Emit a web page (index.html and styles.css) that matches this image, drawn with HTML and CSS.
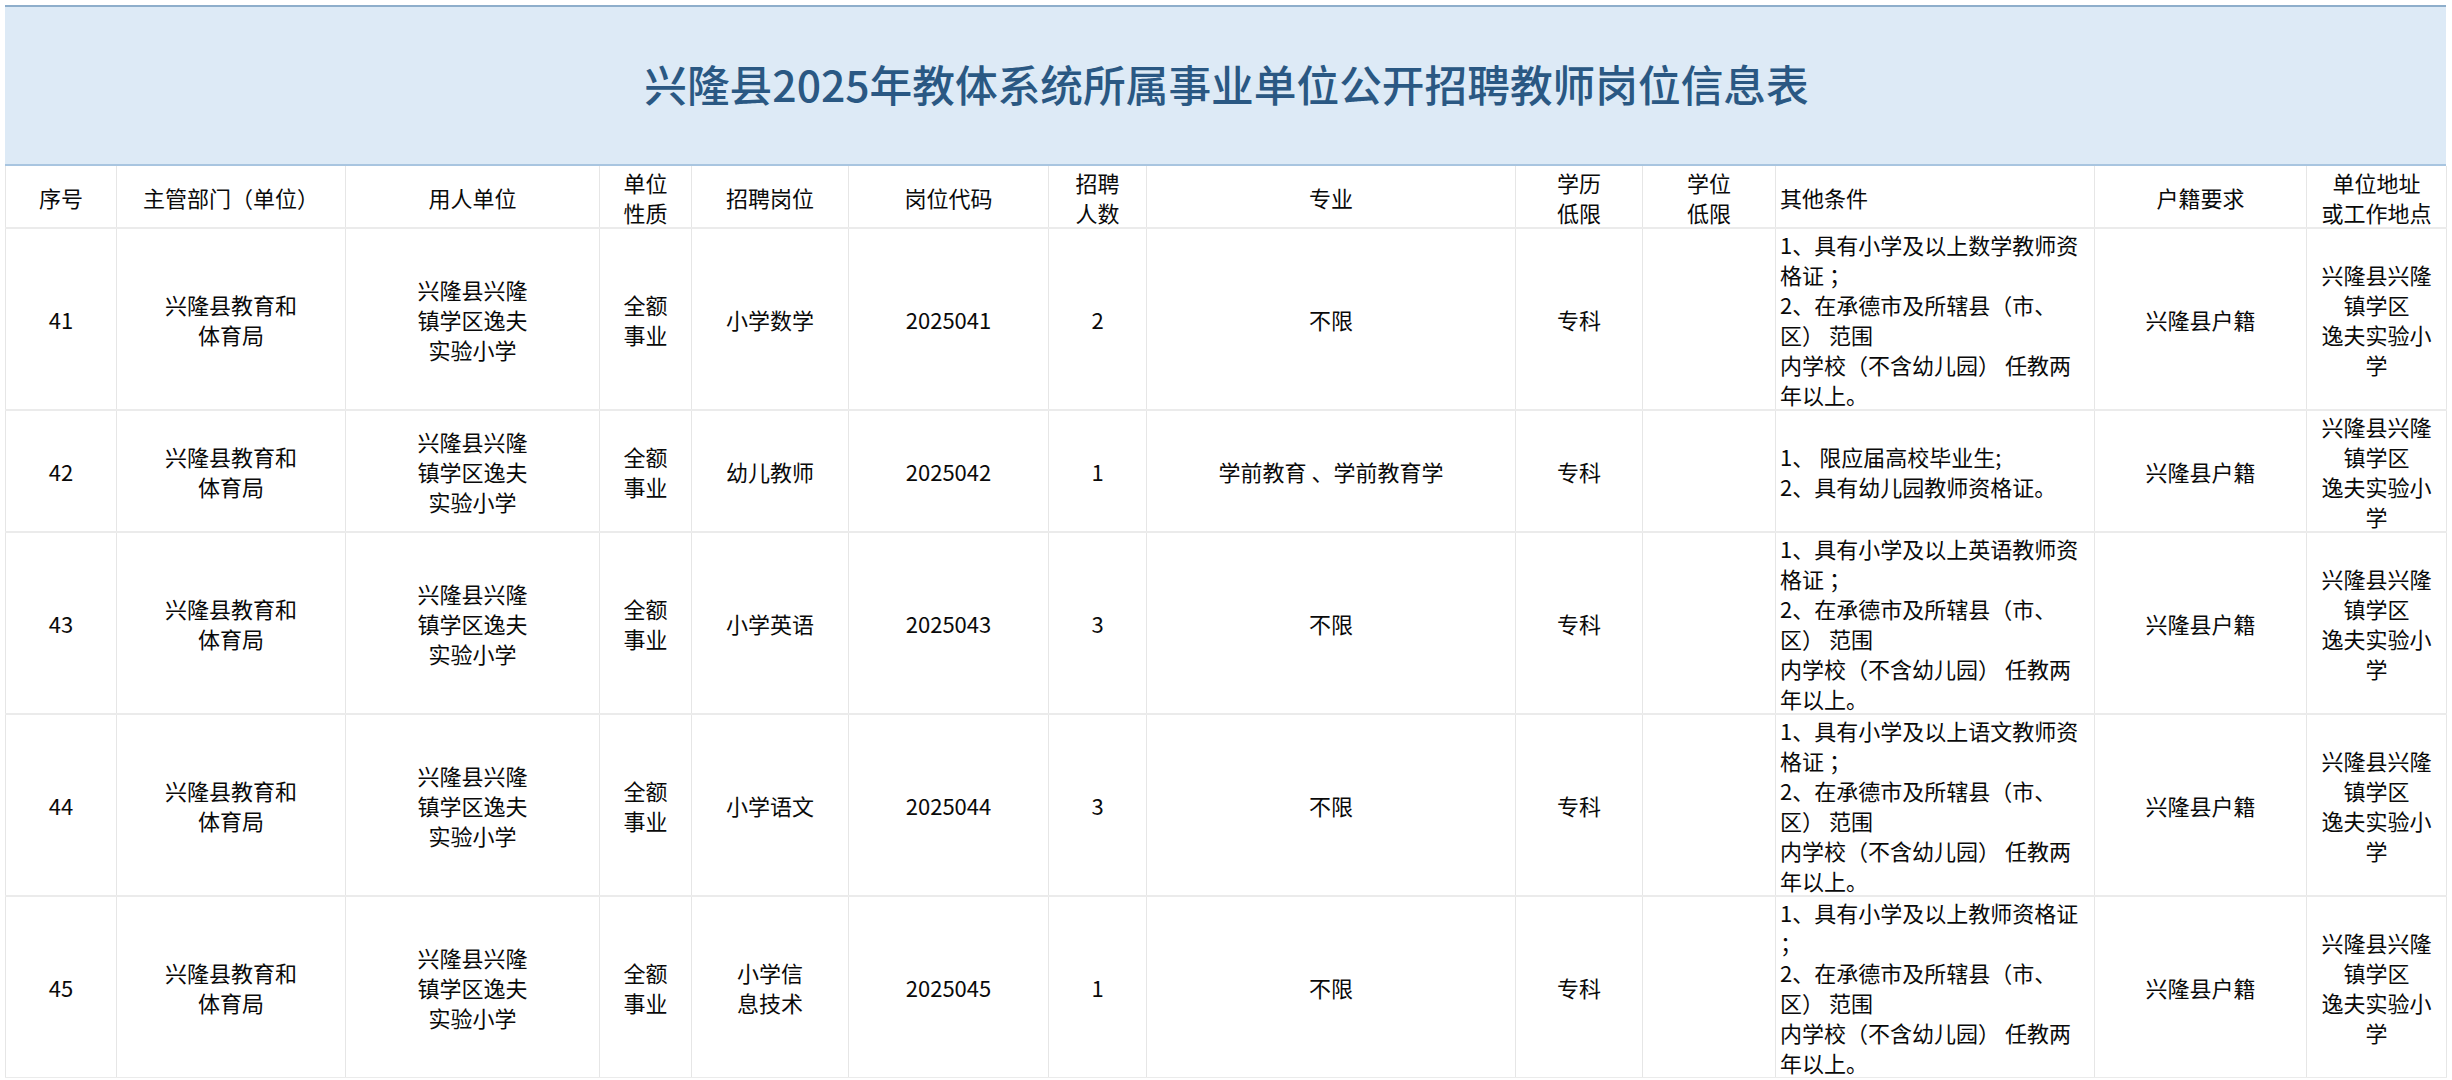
FILE: index.html
```html
<!DOCTYPE html>
<html lang="zh-CN">
<head>
<meta charset="utf-8">
<title>兴隆县2025年教体系统所属事业单位公开招聘教师岗位信息表</title>
<link rel="stylesheet" href="styles.css">
</head>
<body>
<div class="sheet">
  <div class="banner">
    <h1 class="title">兴隆县2025年教体系统所属事业单位公开招聘教师岗位信息表</h1>
  </div>
  <table class="grid">
    <colgroup>
      <col class="c-no">
      <col class="c-dept">
      <col class="c-unit">
      <col class="c-kind">
      <col class="c-post">
      <col class="c-code">
      <col class="c-num">
      <col class="c-major">
      <col class="c-edu">
      <col class="c-deg">
      <col class="c-other">
      <col class="c-huji">
      <col class="c-addr">
    </colgroup>
    <thead>
      <tr class="head">
        <th>序号</th>
        <th>主管部门（单位）</th>
        <th>用人单位</th>
        <th>单位<br>性质</th>
        <th>招聘岗位</th>
        <th>岗位代码</th>
        <th>招聘<br>人数</th>
        <th>专业</th>
        <th>学历<br>低限</th>
        <th>学位<br>低限</th>
        <th class="left">其他条件</th>
        <th>户籍要求</th>
        <th>单位地址<br>或工作地点</th>
      </tr>
    </thead>
    <tbody>
      <tr class="tall">
        <td>41</td>
        <td>兴隆县教育和<br>体育局</td>
        <td>兴隆县兴隆<br>镇学区逸夫<br>实验小学</td>
        <td>全额<br>事业</td>
        <td>小学数学</td>
        <td>2025041</td>
        <td>2</td>
        <td>不限</td>
        <td>专科</td>
        <td></td>
        <td class="left">1、具有小学及以上数学教师资<br>格证 ；<br>2、在承德市及所辖县（市、<br>区） 范围<br>内学校（不含幼儿园） 任教两<br>年以上。</td>
        <td>兴隆县户籍</td>
        <td>兴隆县兴隆<br>镇学区<br>逸夫实验小<br>学</td>
      </tr>
      <tr class="short">
        <td>42</td>
        <td>兴隆县教育和<br>体育局</td>
        <td>兴隆县兴隆<br>镇学区逸夫<br>实验小学</td>
        <td>全额<br>事业</td>
        <td>幼儿教师</td>
        <td>2025042</td>
        <td>1</td>
        <td>学前教育 、学前教育学</td>
        <td>专科</td>
        <td></td>
        <td class="left">1、 限应届高校毕业生;<br>2、具有幼儿园教师资格证。</td>
        <td>兴隆县户籍</td>
        <td>兴隆县兴隆<br>镇学区<br>逸夫实验小<br>学</td>
      </tr>
      <tr class="tall">
        <td>43</td>
        <td>兴隆县教育和<br>体育局</td>
        <td>兴隆县兴隆<br>镇学区逸夫<br>实验小学</td>
        <td>全额<br>事业</td>
        <td>小学英语</td>
        <td>2025043</td>
        <td>3</td>
        <td>不限</td>
        <td>专科</td>
        <td></td>
        <td class="left">1、具有小学及以上英语教师资<br>格证 ；<br>2、在承德市及所辖县（市、<br>区） 范围<br>内学校（不含幼儿园） 任教两<br>年以上。</td>
        <td>兴隆县户籍</td>
        <td>兴隆县兴隆<br>镇学区<br>逸夫实验小<br>学</td>
      </tr>
      <tr class="tall">
        <td>44</td>
        <td>兴隆县教育和<br>体育局</td>
        <td>兴隆县兴隆<br>镇学区逸夫<br>实验小学</td>
        <td>全额<br>事业</td>
        <td>小学语文</td>
        <td>2025044</td>
        <td>3</td>
        <td>不限</td>
        <td>专科</td>
        <td></td>
        <td class="left">1、具有小学及以上语文教师资<br>格证 ；<br>2、在承德市及所辖县（市、<br>区） 范围<br>内学校（不含幼儿园） 任教两<br>年以上。</td>
        <td>兴隆县户籍</td>
        <td>兴隆县兴隆<br>镇学区<br>逸夫实验小<br>学</td>
      </tr>
      <tr class="tall">
        <td>45</td>
        <td>兴隆县教育和<br>体育局</td>
        <td>兴隆县兴隆<br>镇学区逸夫<br>实验小学</td>
        <td>全额<br>事业</td>
        <td>小学信<br>息技术</td>
        <td>2025045</td>
        <td>1</td>
        <td>不限</td>
        <td>专科</td>
        <td></td>
        <td class="left">1、具有小学及以上教师资格证<br>；<br>2、在承德市及所辖县（市、<br>区） 范围<br>内学校（不含幼儿园） 任教两<br>年以上。</td>
        <td>兴隆县户籍</td>
        <td>兴隆县兴隆<br>镇学区<br>逸夫实验小<br>学</td>
      </tr>
    </tbody>
  </table>
</div>
</body>
</html>
```
FILE: styles.css
```css
html, body {
  margin: 0;
  padding: 0;
  background: #ffffff;
}

body {
  font-family: "Noto Sans CJK SC", "Noto Sans", sans-serif;
  color: #0a0a0a;
}

.sheet {
  width: 2441px;
  padding: 5px 6px 0 5px;
}

.banner {
  height: 157px;
  background: #ddeaf6;
  border-top: 2px solid #8eaecb;
  border-bottom: 2px solid #a8c5e0;
  display: flex;
  align-items: center;
  justify-content: center;
}

.title {
  margin: 0;
  font-size: 42.7px;
  font-weight: 500;
  color: #2a5883;
  line-height: 1;
  padding-bottom: 4px;
  padding-left: 2px;
}

.grid {
  width: 2441px;
  table-layout: fixed;
  border-collapse: collapse;
  font-size: 22px;
  line-height: 30px;
}

.c-no { width: 111px; }
.c-dept { width: 229px; }
.c-unit { width: 254px; }
.c-kind { width: 92px; }
.c-post { width: 157px; }
.c-code { width: 200px; }
.c-num { width: 98px; }
.c-major { width: 369px; }
.c-edu { width: 127px; }
.c-deg { width: 133px; }
.c-other { width: 319px; }
.c-huji { width: 212px; }
.c-addr { width: 140px; }

.grid th,
.grid td {
  padding: 0 2px;
  text-align: center;
  vertical-align: middle;
  border-left: 1px solid #e6e6e6;
  border-right: 1px solid #e6e6e6;
  border-bottom: 2px solid #ebebeb;
  white-space: nowrap;
  overflow: hidden;
}

.grid th {
  font-weight: 400;
  height: 61px;
}

.grid .left {
  text-align: left;
  padding-left: 4px;
}

.grid tbody tr.short td {
  height: 116px;
}

.grid tbody tr.tall td {
  height: 179px;
}

.grid tbody tr:last-child td {
  border-bottom-width: 1px;
}
```
